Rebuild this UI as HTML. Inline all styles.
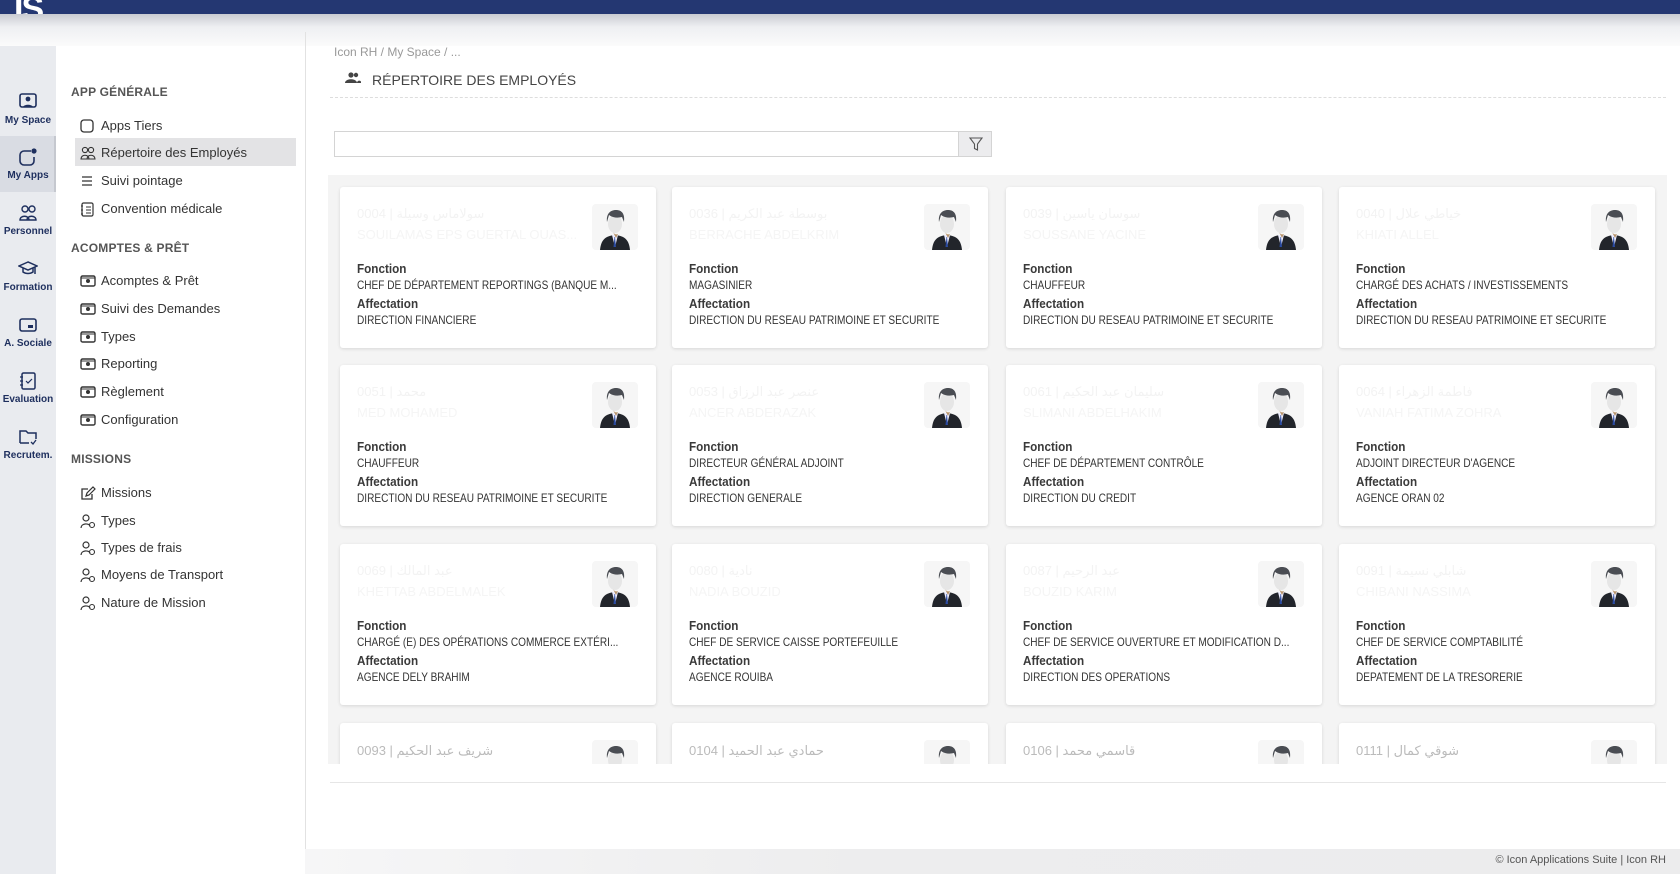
<!DOCTYPE html>
<html><head><meta charset="utf-8"><style>
*{box-sizing:border-box;margin:0;padding:0}
body{width:1680px;height:874px;overflow:hidden;background:#fff;font-family:"Liberation Sans","DejaVu Sans",sans-serif;position:relative;color:#333}
.top{position:absolute;left:0;top:0;width:1680px;height:14px;background:#243772}
.shadow{position:absolute;left:0;top:14px;width:1680px;height:32px;background:linear-gradient(#c9cbd2,#eeeff2 40%,#fbfbfb)}
.logo{position:absolute;left:14px;top:-10px;color:#fff;font:bold 34px "Liberation Sans",sans-serif;letter-spacing:-2px}
.side{position:absolute;left:0;top:46px;width:56px;height:828px;background:#e9ebef}
.si{position:absolute;left:0;width:56px;text-align:center;font-size:10px;font-weight:bold;color:#1e2f5e}
.si svg{display:block;margin:0 auto 4px}
.act{position:absolute;left:0;top:136px;width:56px;height:56px;background:#d9dce3;border-right:2px solid #c5c8cf}
.menu{position:absolute;left:56px;top:46px;width:249px;height:828px;background:#fff}
.vl{position:absolute;left:305px;top:32px;width:1px;height:842px;background:#e2e2e2}
.mh{position:absolute;left:71px;font-size:12px;color:#555;font-weight:bold;letter-spacing:0.2px}
.mi{position:absolute;left:80px;font-size:13px;color:#333;height:20px;line-height:20px}
.mi svg{position:absolute;left:0;top:3px}
.mi span{position:absolute;left:21px;white-space:nowrap}
.hl{position:absolute;left:75px;top:138px;width:221px;height:28px;background:#e3e3e5}
.bc{position:absolute;left:334px;top:45px;font-size:12px;color:#999}
.title{position:absolute;left:372px;top:72px;font-size:14px;color:#444}
.dash{position:absolute;left:330px;top:97px;width:1336px;border-top:1px dashed #ddd}
.search{position:absolute;left:334px;top:131px;width:626px;height:26px;border:1px solid #d4d4d4;border-right:none}
.filt{position:absolute;left:958px;top:131px;width:34px;height:26px;border:1px solid #d4d4d4;background:#ececee}
.grid{position:absolute;left:328px;top:175px;width:1339px;height:589px;background:#f4f4f4;overflow:hidden}
.card{position:absolute;width:316px;height:161px;background:#fff;border-radius:3px;box-shadow:0 1px 3px rgba(0,0,0,.12)}
.nm{position:absolute;left:17px;top:19px;font-size:13px;color:#f3f3f3;white-space:nowrap}
.nm2{position:absolute;left:17px;top:40px;font-size:13px;color:#f5f5f5;white-space:nowrap}
.av{position:absolute;left:252px;top:17px;width:46px;height:46px;background:#f6f6f6;border-radius:4px}
.lb{position:absolute;left:17px;font-size:13px;font-weight:bold;color:#3a3a3a;white-space:nowrap;transform:scaleX(.9);transform-origin:left}
.vv{position:absolute;left:17px;font-size:12px;color:#333;white-space:nowrap;transform:scaleX(.84);transform-origin:left}
.bl{position:absolute;left:330px;top:782px;width:1336px;border-top:1px solid #e6e6e6}
.foot{position:absolute;left:305px;top:849px;width:1375px;height:25px;background:linear-gradient(90deg,#f6f6f7,#ededee 40%,#ececed)}
.foot span{position:absolute;right:14px;top:5px;font-size:11px;color:#555}
</style></head><body>
<div class="top"><div class="logo">IS</div></div>
<div class="shadow"></div>
<div class="side"></div>
<div class="act"></div>
<div class="si" style="top:93px"><svg width="20" height="18" viewBox="0 0 20 18"><rect x="2" y="1" width="16" height="13" rx="2" fill="none" stroke="#1e2f5e" stroke-width="1.6"/><circle cx="10" cy="6" r="2.4" fill="#1e2f5e"/><path d="M5 14c1-3 9-3 10 0" fill="#1e2f5e"/></svg>My Space</div>
<div class="si" style="top:148px"><svg width="20" height="18" viewBox="0 0 20 18"><path d="M13 3H6a4 4 0 0 0-4 4v6a4 4 0 0 0 4 4h6a4 4 0 0 0 4-4V9" fill="none" stroke="#1e2f5e" stroke-width="1.6"/><circle cx="16" cy="3" r="2.6" fill="#1e2f5e"/></svg>My Apps</div>
<div class="si" style="top:204px"><svg width="20" height="18" viewBox="0 0 20 18"><circle cx="7" cy="5" r="3" fill="none" stroke="#1e2f5e" stroke-width="1.4"/><circle cx="14" cy="5" r="3" fill="none" stroke="#1e2f5e" stroke-width="1.4"/><path d="M2 16c0-5 9-5 9 0zM9 16c0-5 9-5 9 0z" fill="none" stroke="#1e2f5e" stroke-width="1.4"/></svg>Personnel</div>
<div class="si" style="top:260px"><svg width="20" height="18" viewBox="0 0 20 18"><path d="M10 2 1 6l9 4 9-4zM5 8v4c3 2 7 2 10 0V8M17 7v7" fill="none" stroke="#1e2f5e" stroke-width="1.5"/></svg>Formation</div>
<div class="si" style="top:316px"><svg width="20" height="18" viewBox="0 0 20 18"><rect x="2" y="3" width="16" height="12" rx="2" fill="none" stroke="#1e2f5e" stroke-width="1.6"/><rect x="10" y="9" width="5" height="3" fill="#1e2f5e"/></svg>A. Sociale</div>
<div class="si" style="top:372px"><svg width="20" height="18" viewBox="0 0 20 18"><rect x="4" y="1" width="13" height="16" rx="1.5" fill="none" stroke="#1e2f5e" stroke-width="1.5"/><path d="M8 9l2 2 4-4M2 5h3M2 9h3M2 13h3" fill="none" stroke="#1e2f5e" stroke-width="1.2"/></svg>Evaluation</div>
<div class="si" style="top:428px"><svg width="20" height="18" viewBox="0 0 20 18"><path d="M2 15V3h6l2 2h8v6M2 15h9" fill="none" stroke="#1e2f5e" stroke-width="1.5"/><path d="M13 14l2 2 3-4" fill="none" stroke="#1e2f5e" stroke-width="1.3"/></svg>Recrutem.</div>

<div class="menu"></div>
<div class="vl"></div>
<div class="hl"></div>
<div class="mh" style="top:85px">APP GÉNÉRALE</div>
<div class="mi" style="top:116px"><svg width="14" height="14"><rect x="1" y="1" width="12" height="12" rx="3" fill="none" stroke="#333" stroke-width="1.3"/></svg><span>Apps Tiers</span></div>
<div class="mi" style="top:143px"><svg width="16" height="14"><circle cx="5" cy="4" r="2.6" fill="none" stroke="#333" stroke-width="1.1"/><circle cx="11" cy="4" r="2.6" fill="none" stroke="#333" stroke-width="1.1"/><path d="M1 13c0-5 8-5 8 0zM7 13c0-5 8-5 8 0z" fill="none" stroke="#333" stroke-width="1.1"/></svg><span>Répertoire des Employés</span></div>
<div class="mi" style="top:171px"><svg width="14" height="14"><path d="M2 3h10M2 7h10M2 11h10" stroke="#333" stroke-width="1.2"/></svg><span>Suivi pointage</span></div>
<div class="mi" style="top:199px"><svg width="14" height="15"><rect x="2" y="1" width="11" height="13" rx="1.5" fill="none" stroke="#333" stroke-width="1.2"/><path d="M6 5h5M6 8h5M6 11h5M1 4h2M1 8h2M1 12h2" stroke="#333" stroke-width="1"/></svg><span>Convention médicale</span></div>
<div class="mh" style="top:241px">ACOMPTES &amp; PRÊT</div>
<div class="mi" style="top:271px"><svg width="16" height="14"><rect x="1" y="2" width="14" height="10" rx="1.5" fill="none" stroke="#333" stroke-width="1.4"/><circle cx="8" cy="7" r="2" fill="#333"/><path d="M1 4h14" stroke="#333"/></svg><span>Acomptes &amp; Prêt</span></div>
<div class="mi" style="top:299px"><svg width="16" height="14"><rect x="1" y="2" width="14" height="10" rx="1.5" fill="none" stroke="#333" stroke-width="1.4"/><circle cx="8" cy="7" r="2" fill="#333"/><path d="M1 4h14" stroke="#333"/></svg><span>Suivi des Demandes</span></div>
<div class="mi" style="top:327px"><svg width="16" height="14"><rect x="1" y="2" width="14" height="10" rx="1.5" fill="none" stroke="#333" stroke-width="1.4"/><circle cx="8" cy="7" r="2" fill="#333"/><path d="M1 4h14" stroke="#333"/></svg><span>Types</span></div>
<div class="mi" style="top:354px"><svg width="16" height="14"><rect x="1" y="2" width="14" height="10" rx="1.5" fill="none" stroke="#333" stroke-width="1.4"/><circle cx="8" cy="7" r="2" fill="#333"/><path d="M1 4h14" stroke="#333"/></svg><span>Reporting</span></div>
<div class="mi" style="top:382px"><svg width="16" height="14"><rect x="1" y="2" width="14" height="10" rx="1.5" fill="none" stroke="#333" stroke-width="1.4"/><circle cx="8" cy="7" r="2" fill="#333"/><path d="M1 4h14" stroke="#333"/></svg><span>Règlement</span></div>
<div class="mi" style="top:410px"><svg width="16" height="14"><rect x="1" y="2" width="14" height="10" rx="1.5" fill="none" stroke="#333" stroke-width="1.4"/><circle cx="8" cy="7" r="2" fill="#333"/><path d="M1 4h14" stroke="#333"/></svg><span>Configuration</span></div>
<div class="mh" style="top:452px">MISSIONS</div>
<div class="mi" style="top:483px"><svg width="16" height="15"><path d="M12 8v5H2V3h6" fill="none" stroke="#333" stroke-width="1.3"/><path d="M6 10l1-3 6-6 2 2-6 6z" fill="none" stroke="#333" stroke-width="1.2"/></svg><span>Missions</span></div>
<div class="mi" style="top:511px"><svg width="16" height="15"><circle cx="6" cy="4" r="3" fill="none" stroke="#333" stroke-width="1.2"/><path d="M1 14c0-5 8-5 9-2" fill="none" stroke="#333" stroke-width="1.2"/><circle cx="12" cy="11" r="2.5" fill="none" stroke="#333" stroke-width="1.1"/></svg><span>Types</span></div>
<div class="mi" style="top:538px"><svg width="16" height="15"><circle cx="6" cy="4" r="3" fill="none" stroke="#333" stroke-width="1.2"/><path d="M1 14c0-5 8-5 9-2" fill="none" stroke="#333" stroke-width="1.2"/><circle cx="12" cy="11" r="2.5" fill="none" stroke="#333" stroke-width="1.1"/></svg><span>Types de frais</span></div>
<div class="mi" style="top:565px"><svg width="16" height="15"><circle cx="6" cy="4" r="3" fill="none" stroke="#333" stroke-width="1.2"/><path d="M1 14c0-5 8-5 9-2" fill="none" stroke="#333" stroke-width="1.2"/><circle cx="12" cy="11" r="2.5" fill="none" stroke="#333" stroke-width="1.1"/></svg><span>Moyens de Transport</span></div>
<div class="mi" style="top:593px"><svg width="16" height="15"><circle cx="6" cy="4" r="3" fill="none" stroke="#333" stroke-width="1.2"/><path d="M1 14c0-5 8-5 9-2" fill="none" stroke="#333" stroke-width="1.2"/><circle cx="12" cy="11" r="2.5" fill="none" stroke="#333" stroke-width="1.1"/></svg><span>Nature de Mission</span></div>

<div class="bc">Icon RH / My Space / ...</div>
<svg style="position:absolute;left:345px;top:72px" width="16" height="12" viewBox="0 0 16 12"><circle cx="6" cy="3" r="2.6" fill="#444"/><circle cx="11" cy="3" r="2.2" fill="#444"/><path d="M0 11c0-5 12-5 12 0zM12 11c0-3 4-3 4-1v1z" fill="#444"/></svg>
<div class="title">RÉPERTOIRE DES EMPLOYÉS</div>
<div class="dash"></div>
<div class="search"></div>
<div class="filt"><svg style="position:absolute;left:10px;top:5px" width="14" height="15" viewBox="0 0 14 15"><path d="M1 1h12L8.5 7v6l-3-1.5V7z" fill="none" stroke="#555" stroke-width="1.1"/></svg></div>

<div class="grid" id="g"></div>
<div class="bl"></div>
<div class="foot"><span>© Icon Applications Suite | Icon RH</span></div>

<svg width="0" height="0" style="position:absolute"><defs><symbol id="man" viewBox="0 0 46 46"><path d="M8 46c1-10 5-14 15-15 10 1 14 5 15 15z" fill="#22252b"/><path d="M20 31l3 12 3-12z" fill="#eef"/><path d="M22.5 33l-1 10h2.5l-1-10z" fill="#2a4aa0"/><ellipse cx="23" cy="20" rx="7" ry="9" fill="#e6e6e6"/><path d="M15 18c-1-9 4-12 9-12 6 0 9 4 8 12l-2-5c-4 1-9 1-13-2z" fill="#4a4d53"/><path d="M21 28c1 2 3 3 5 2l-2 4z" fill="#b8946a"/></symbol></defs></svg>
<script>
var d=[
["0004 | سولاماس وسيلة","SOUILAMAS EPS GUERTAL OUAS...","CHEF DE DÉPARTEMENT REPORTINGS (BANQUE M...","DIRECTION FINANCIERE"],
["0036 | بوسطة عبد الكريم","BERRACHE ABDELKRIM","MAGASINIER","DIRECTION DU RESEAU PATRIMOINE ET SECURITE"],
["0039 | سوسان ياسين","SOUSSANE YACINE","CHAUFFEUR","DIRECTION DU RESEAU PATRIMOINE ET SECURITE"],
["0040 | خياطي علال","KHIATI ALLEL","CHARGÉ DES ACHATS / INVESTISSEMENTS","DIRECTION DU RESEAU PATRIMOINE ET SECURITE"],
["0051 | محمد","MED MOHAMED","CHAUFFEUR","DIRECTION DU RESEAU PATRIMOINE ET SECURITE"],
["0053 | عنصر عبد الرزاق","ANCER ABDERAZAK","DIRECTEUR GÉNÉRAL ADJOINT","DIRECTION GENERALE"],
["0061 | سليمان عبد الحكيم","SLIMANI ABDELHAKIM","CHEF DE DÉPARTEMENT CONTRÔLE","DIRECTION DU CREDIT"],
["0064 | فاطمة الزهراء","VANIAH FATIMA ZOHRA","ADJOINT DIRECTEUR D'AGENCE","AGENCE ORAN 02"],
["0069 | عبد المالك","KHETTAB ABDELMALEK","CHARGÉ (E) DES OPÉRATIONS COMMERCE EXTÉRI...","AGENCE DELY BRAHIM"],
["0080 | نادية","NADIA BOUZID","CHEF DE SERVICE CAISSE PORTEFEUILLE","AGENCE ROUIBA"],
["0087 | عبد الرحيم","BOUZID KARIM","CHEF DE SERVICE OUVERTURE ET MODIFICATION D...","DIRECTION DES OPERATIONS"],
["0091 | شابلي نسيمة","CHIBANI NASSIMA","CHEF DE SERVICE COMPTABILITÉ","DEPATEMENT DE LA TRESORERIE"],
["0093 | شريف عبد الحكيم","","",""],["0104 | حمادي عبد الحميد","","",""],["0106 | قاسمي محمد","","",""],["0111 | شوقي كمال","","",""]];
var h="",xs=[12,344,678,1011],ys=[12,190,369,548];
for(var i=0;i<16;i++){var r=Math.floor(i/4),c=i%4,x=xs[c],y=ys[r];
var s='<div class="card" style="left:'+x+'px;top:'+y+'px"><div class="nm"'+(r==3?' style="color:#bbb;top:20px"':'')+'>'+d[i][0]+'</div><div class="nm2">'+d[i][1]+'</div><div class="av"><svg width="46" height="46"><use href="#man"/></svg></div>';
if(r<3)s+='<div class="lb" style="top:74px">Fonction</div><div class="vv" style="top:91px">'+d[i][2]+'</div><div class="lb" style="top:109px">Affectation</div><div class="vv" style="top:126px">'+d[i][3]+'</div>';
h+=s+'</div>';}
document.getElementById('g').innerHTML=h;
</script>
</body></html>
